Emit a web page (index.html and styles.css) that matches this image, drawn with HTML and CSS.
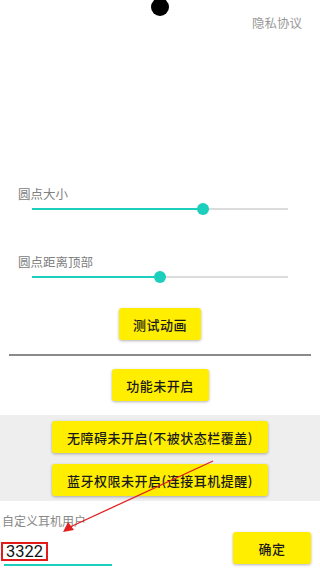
FILE: index.html
```html
<!DOCTYPE html>
<html>
<head>
<meta charset="UTF-8">
<title>设置</title>
<link rel="stylesheet" href="styles.css">
</head>
<body>
<div class="page">
<div class="dot"></div>
<div class="top">
<span class="privacy">隐私协议</span>
</div>
<div class="settings">
<div class="label first">圆点大小</div>
<div class="slider">
<div class="fill" style="width:171px"></div>
<div class="thumb" style="left:165px"></div>
</div>
<div class="label second">圆点距离顶部</div>
<div class="slider">
<div class="fill" style="width:128px"></div>
<div class="thumb" style="left:122px"></div>
</div>
</div>
<div class="center test">
<button class="btn">测试动画</button>
</div>
<div class="line"></div>
<div class="center func">
<button class="btn">功能未开启</button>
</div>
<div class="panel">
<button class="btn wide">无障碍未开启(不被状态栏覆盖)</button>
<button class="btn wide">蓝牙权限未开启(连接耳机提醒)</button>
</div>
<div class="user-label">自定义耳机用户</div>
<div class="user-row">
<div class="edit">
<span class="value">3322</span>
<div class="underline"></div>
</div>
<button class="btn ok">确定</button>
</div>
<svg class="arrow" width="320" height="568" viewBox="0 0 320 568">
<line x1="213" y1="461" x2="70" y2="527" stroke="#e02020" stroke-width="1.3"/>
<polygon points="63,532 68,522 74,530" fill="#e02020"/>
</svg>
</div>
</body>
</html>
```
FILE: styles.css
```css
html,body{
margin:0px;
padding:0px;
}
body{
background:#fff;
font-family:"Noto Sans CJK SC","Noto Sans",sans-serif;
}
.page{
position:relative;
width:320px;
height:568px;
overflow:hidden;
}
.dot{
position:absolute;
left:151px;
top:-2px;
width:18px;
height:18px;
border-radius:50%;
background:#000;
}
.top{
padding:9px 18px 0 0;
height:16px;
text-align:right;
}
.privacy{
font-size:12.5px;
line-height:16px;
color:#999;
}
.label{
padding-left:18px;
font-size:12.5px;
line-height:16px;
color:#808080;
}
.label.first{
margin-top:161px;
}
.label.second{
margin-top:39px;
}
.slider{
position:relative;
height:12px;
margin:1px 32px 0 32px;
}
.slider:before{
content:"";
position:absolute;
left:0;
right:0;
top:5px;
height:2px;
background:#dcdcdc;
}
.slider .fill{
position:absolute;
left:0;
top:5px;
height:2px;
background:#1ccfbd;
}
.slider .thumb{
position:absolute;
top:0;
width:12px;
height:12px;
border-radius:50%;
background:#1ccfbd;
}
.center{
display:flex;
justify-content:center;
}
.test{
margin-top:25px;
}
.btn{
border:none;
outline:none;
height:32px;
padding:0 14px;
background:#ffee00;
color:#1a1a1a;
font-family:"Noto Sans CJK SC","Noto Sans",sans-serif;
font-size:13px;
font-weight:500;
letter-spacing:0.5px;
border-radius:3px;
box-shadow:0 1px 3px rgba(0,0,0,0.3);
}
.test .btn{
width:82px;
padding:0;
}
.func .btn{
width:97px;
padding:0;
}
.line{
margin:14px 9px 0 9px;
height:2px;
background:#8a8a8a;
}
.func{
margin-top:13px;
}
.panel{
margin-top:14px;
padding:6px 0 5px 0;
background:#eeeeee;
display:flex;
flex-direction:column;
align-items:center;
gap:11px;
}
.btn.wide{
width:216px;
padding:0;
}
.user-label{
margin-top:12px;
padding-left:2px;
font-size:12px;
line-height:16px;
color:#888;
}
.user-row{
margin-top:3px;
display:flex;
justify-content:space-between;
align-items:flex-start;
padding-right:9px;
}
.edit{
width:112px;
padding-top:6px;
}
.value{
display:inline-block;
margin-left:1px;
padding:0 3px;
border:2px solid #e41b1b;
font-family:Roboto,"Liberation Sans",sans-serif;
font-size:16.5px;
line-height:15px;
color:#111;
}
.underline{
margin:2px 0 0 4px;
width:108px;
height:2px;
background:#1ccfbd;
}
.btn.ok{
width:78px;
padding:0;
}
.arrow{
position:absolute;
left:0;
top:0;
pointer-events:none;
}
```
